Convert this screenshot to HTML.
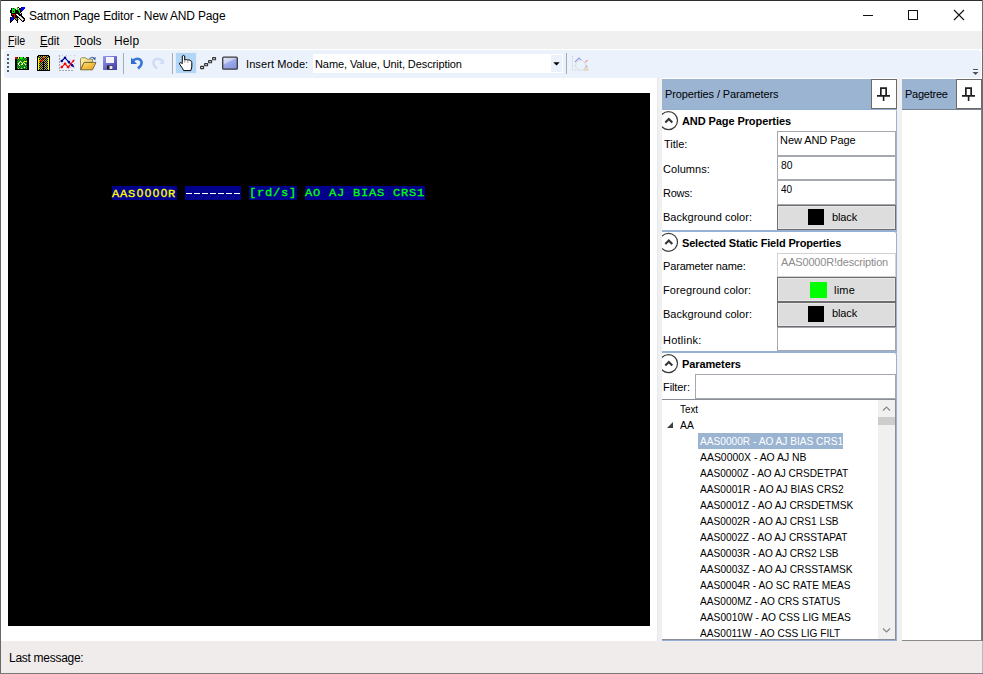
<!DOCTYPE html>
<html><head><meta charset="utf-8"><title>Satmon Page Editor</title>
<style>
*{box-sizing:border-box;margin:0;padding:0}
html,body{width:983px;height:674px;overflow:hidden;background:#fff}
body{position:relative;font-family:"Liberation Sans",sans-serif;font-size:12px;color:#000}
.a{position:absolute}
.t{position:absolute;white-space:nowrap}
.mono{position:absolute;white-space:nowrap;font-family:"Liberation Mono",monospace;font-size:12px;line-height:14px;letter-spacing:0.8px;-webkit-text-stroke:0.35px currentColor;transform:scaleY(0.94);transform-origin:0 0}
.tb{left:777px;width:119px;border:1px solid #a6a8b0;background:#fff}
.btn{left:777px;width:119px;border:1px solid #6e6e6e;background:#dddddd;box-shadow:inset 0 0 0 1px #e8e8e8}
.z{display:inline-block;width:8px;text-align:center;letter-spacing:0;font-family:"Liberation Sans",sans-serif;font-size:11.6px}
u{text-decoration-thickness:1px;text-underline-offset:1px}
</style></head><body>

<!-- window frame -->
<div class="a" style="left:0;top:0;width:983px;height:1px;background:#2e2e2e"></div>
<div class="a" style="left:0;top:0;width:1px;height:674px;background:#686868"></div>
<div class="a" style="left:982px;top:0;width:1px;height:641px;background:#6e6e6e"></div>
<div class="a" style="left:982px;top:641px;width:1px;height:33px;background:#b8b8b8"></div>
<div class="a" style="left:0;top:673px;width:983px;height:1px;background:#787878"></div>

<!-- app icon -->
<svg class="a" style="left:9px;top:6px" width="17" height="17" viewBox="0 0 17 17" shape-rendering="crispEdges"><rect x="8" y="1" width="1" height="1" fill="#a09000"/><rect x="9" y="1" width="1" height="1" fill="#000"/><rect x="12" y="1" width="1" height="1" fill="#000"/><rect x="13" y="1" width="1" height="1" fill="#0000ff"/><rect x="14" y="1" width="1" height="1" fill="#0000ff"/><rect x="15" y="1" width="1" height="1" fill="#0000ff"/><rect x="2" y="2" width="1" height="1" fill="#000"/><rect x="3" y="2" width="1" height="1" fill="#00e800"/><rect x="4" y="2" width="1" height="1" fill="#000"/><rect x="5" y="2" width="1" height="1" fill="#00e800"/><rect x="8" y="2" width="1" height="1" fill="#00e800"/><rect x="9" y="2" width="1" height="1" fill="#fff"/><rect x="10" y="2" width="1" height="1" fill="#000"/><rect x="11" y="2" width="1" height="1" fill="#000"/><rect x="12" y="2" width="1" height="1" fill="#0000ff"/><rect x="13" y="2" width="1" height="1" fill="#0000ff"/><rect x="14" y="2" width="1" height="1" fill="#0000ff"/><rect x="15" y="2" width="1" height="1" fill="#0000ff"/><rect x="2" y="3" width="1" height="1" fill="#000"/><rect x="3" y="3" width="1" height="1" fill="#00e800"/><rect x="4" y="3" width="1" height="1" fill="#00e800"/><rect x="5" y="3" width="1" height="1" fill="#00e800"/><rect x="6" y="3" width="1" height="1" fill="#000"/><rect x="8" y="3" width="1" height="1" fill="#00e800"/><rect x="9" y="3" width="1" height="1" fill="#00e800"/><rect x="10" y="3" width="1" height="1" fill="#000"/><rect x="11" y="3" width="1" height="1" fill="#000"/><rect x="12" y="3" width="1" height="1" fill="#0000ff"/><rect x="13" y="3" width="1" height="1" fill="#0000ff"/><rect x="14" y="3" width="1" height="1" fill="#0000ff"/><rect x="1" y="4" width="1" height="1" fill="#000"/><rect x="2" y="4" width="1" height="1" fill="#000"/><rect x="3" y="4" width="1" height="1" fill="#00e800"/><rect x="4" y="4" width="1" height="1" fill="#00e800"/><rect x="5" y="4" width="1" height="1" fill="#00e800"/><rect x="6" y="4" width="1" height="1" fill="#000"/><rect x="7" y="4" width="1" height="1" fill="#000"/><rect x="8" y="4" width="1" height="1" fill="#000"/><rect x="9" y="4" width="1" height="1" fill="#00e800"/><rect x="10" y="4" width="1" height="1" fill="#00e800"/><rect x="11" y="4" width="1" height="1" fill="#000"/><rect x="12" y="4" width="1" height="1" fill="#0000ff"/><rect x="13" y="4" width="1" height="1" fill="#0000ff"/><rect x="1" y="5" width="1" height="1" fill="#000"/><rect x="2" y="5" width="1" height="1" fill="#000"/><rect x="3" y="5" width="1" height="1" fill="#00e800"/><rect x="4" y="5" width="1" height="1" fill="#000"/><rect x="5" y="5" width="1" height="1" fill="#00e800"/><rect x="6" y="5" width="1" height="1" fill="#000"/><rect x="7" y="5" width="1" height="1" fill="#000"/><rect x="8" y="5" width="1" height="1" fill="#000"/><rect x="9" y="5" width="1" height="1" fill="#000"/><rect x="10" y="5" width="1" height="1" fill="#00e800"/><rect x="11" y="5" width="1" height="1" fill="#000"/><rect x="12" y="5" width="1" height="1" fill="#000"/><rect x="1" y="6" width="1" height="1" fill="#000"/><rect x="2" y="6" width="1" height="1" fill="#000"/><rect x="3" y="6" width="1" height="1" fill="#00e800"/><rect x="4" y="6" width="1" height="1" fill="#00e800"/><rect x="5" y="6" width="1" height="1" fill="#00e800"/><rect x="6" y="6" width="1" height="1" fill="#000"/><rect x="7" y="6" width="1" height="1" fill="#000"/><rect x="8" y="6" width="1" height="1" fill="#000"/><rect x="9" y="6" width="1" height="1" fill="#000"/><rect x="10" y="6" width="1" height="1" fill="#00e800"/><rect x="11" y="6" width="1" height="1" fill="#000"/><rect x="12" y="6" width="1" height="1" fill="#fff"/><rect x="2" y="7" width="1" height="1" fill="#000"/><rect x="3" y="7" width="1" height="1" fill="#000"/><rect x="4" y="7" width="1" height="1" fill="#000"/><rect x="5" y="7" width="1" height="1" fill="#000"/><rect x="6" y="7" width="1" height="1" fill="#000"/><rect x="7" y="7" width="1" height="1" fill="#000"/><rect x="8" y="7" width="1" height="1" fill="#000"/><rect x="9" y="7" width="1" height="1" fill="#000"/><rect x="10" y="7" width="1" height="1" fill="#000"/><rect x="11" y="7" width="1" height="1" fill="#fff"/><rect x="12" y="7" width="1" height="1" fill="#000"/><rect x="2" y="8" width="1" height="1" fill="#000"/><rect x="3" y="8" width="1" height="1" fill="#ff0000"/><rect x="4" y="8" width="1" height="1" fill="#ff0000"/><rect x="5" y="8" width="1" height="1" fill="#ff0000"/><rect x="6" y="8" width="1" height="1" fill="#000"/><rect x="7" y="8" width="1" height="1" fill="#fff"/><rect x="8" y="8" width="1" height="1" fill="#fff"/><rect x="9" y="8" width="1" height="1" fill="#000"/><rect x="10" y="8" width="1" height="1" fill="#000"/><rect x="11" y="8" width="1" height="1" fill="#000"/><rect x="12" y="8" width="1" height="1" fill="#000"/><rect x="2" y="9" width="1" height="1" fill="#000"/><rect x="3" y="9" width="1" height="1" fill="#000"/><rect x="4" y="9" width="1" height="1" fill="#000"/><rect x="5" y="9" width="1" height="1" fill="#ff0000"/><rect x="6" y="9" width="1" height="1" fill="#000"/><rect x="7" y="9" width="1" height="1" fill="#000"/><rect x="8" y="9" width="1" height="1" fill="#fff"/><rect x="9" y="9" width="1" height="1" fill="#fff"/><rect x="10" y="9" width="1" height="1" fill="#000"/><rect x="11" y="9" width="1" height="1" fill="#000"/><rect x="12" y="9" width="1" height="1" fill="#000"/><rect x="3" y="10" width="1" height="1" fill="#000"/><rect x="4" y="10" width="1" height="1" fill="#000"/><rect x="5" y="10" width="1" height="1" fill="#ff0000"/><rect x="6" y="10" width="1" height="1" fill="#000"/><rect x="7" y="10" width="1" height="1" fill="#000"/><rect x="8" y="10" width="1" height="1" fill="#000"/><rect x="9" y="10" width="1" height="1" fill="#c8c8c8"/><rect x="10" y="10" width="1" height="1" fill="#fff"/><rect x="11" y="10" width="1" height="1" fill="#c8c8c8"/><rect x="12" y="10" width="1" height="1" fill="#000"/><rect x="13" y="10" width="1" height="1" fill="#000"/><rect x="1" y="11" width="1" height="1" fill="#000"/><rect x="2" y="11" width="1" height="1" fill="#0000ff"/><rect x="3" y="11" width="1" height="1" fill="#0000ff"/><rect x="4" y="11" width="1" height="1" fill="#000"/><rect x="5" y="11" width="1" height="1" fill="#ff0000"/><rect x="6" y="11" width="1" height="1" fill="#000"/><rect x="7" y="11" width="1" height="1" fill="#000"/><rect x="8" y="11" width="1" height="1" fill="#000"/><rect x="9" y="11" width="1" height="1" fill="#000"/><rect x="10" y="11" width="1" height="1" fill="#c8c8c8"/><rect x="11" y="11" width="1" height="1" fill="#fff"/><rect x="12" y="11" width="1" height="1" fill="#c8c8c8"/><rect x="13" y="11" width="1" height="1" fill="#000"/><rect x="14" y="11" width="1" height="1" fill="#000"/><rect x="1" y="12" width="1" height="1" fill="#000"/><rect x="2" y="12" width="1" height="1" fill="#0000ff"/><rect x="3" y="12" width="1" height="1" fill="#0000ff"/><rect x="4" y="12" width="1" height="1" fill="#0000ff"/><rect x="5" y="12" width="1" height="1" fill="#000"/><rect x="6" y="12" width="1" height="1" fill="#a09000"/><rect x="7" y="12" width="1" height="1" fill="#a09000"/><rect x="8" y="12" width="1" height="1" fill="#000"/><rect x="10" y="12" width="1" height="1" fill="#000"/><rect x="11" y="12" width="1" height="1" fill="#c8c8c8"/><rect x="12" y="12" width="1" height="1" fill="#fff"/><rect x="13" y="12" width="1" height="1" fill="#c8c8c8"/><rect x="14" y="12" width="1" height="1" fill="#000"/><rect x="15" y="12" width="1" height="1" fill="#000"/><rect x="1" y="13" width="1" height="1" fill="#000"/><rect x="2" y="13" width="1" height="1" fill="#0000ff"/><rect x="3" y="13" width="1" height="1" fill="#0000ff"/><rect x="4" y="13" width="1" height="1" fill="#000"/><rect x="6" y="13" width="1" height="1" fill="#000"/><rect x="7" y="13" width="1" height="1" fill="#a09000"/><rect x="8" y="13" width="1" height="1" fill="#000"/><rect x="9" y="13" width="1" height="1" fill="#a09000"/><rect x="11" y="13" width="1" height="1" fill="#000"/><rect x="12" y="13" width="1" height="1" fill="#c8c8c8"/><rect x="13" y="13" width="1" height="1" fill="#fff"/><rect x="14" y="13" width="1" height="1" fill="#c8c8c8"/><rect x="15" y="13" width="1" height="1" fill="#000"/><rect x="1" y="14" width="1" height="1" fill="#000"/><rect x="2" y="14" width="1" height="1" fill="#0000ff"/><rect x="3" y="14" width="1" height="1" fill="#000"/><rect x="7" y="14" width="1" height="1" fill="#000"/><rect x="8" y="14" width="1" height="1" fill="#000"/><rect x="12" y="14" width="1" height="1" fill="#000"/><rect x="13" y="14" width="1" height="1" fill="#c8c8c8"/><rect x="14" y="14" width="1" height="1" fill="#000"/><rect x="15" y="14" width="1" height="1" fill="#000"/><rect x="1" y="15" width="1" height="1" fill="#000"/><rect x="2" y="15" width="1" height="1" fill="#000"/><rect x="8" y="15" width="1" height="1" fill="#000"/><rect x="13" y="15" width="1" height="1" fill="#000"/><rect x="14" y="15" width="1" height="1" fill="#000"/><rect x="1" y="16" width="1" height="1" fill="#000"/><rect x="8" y="16" width="1" height="1" fill="#000"/></svg>

<!-- window buttons -->
<div class="a" style="left:863px;top:15px;width:10px;height:1px;background:#111"></div>
<div class="a" style="left:908px;top:10px;width:10px;height:10px;border:1px solid #111"></div>
<svg class="a" style="left:953px;top:9px" width="12" height="12" viewBox="0 0 12 12"><path d="M1 1L11 11M11 1L1 11" stroke="#111" stroke-width="1.1"/></svg>

<!-- menu bar -->
<div class="a" style="left:1px;top:31px;width:981px;height:18px;background:#f0f0f0"></div>

<!-- toolbar -->
<div class="a" style="left:4px;top:50px;width:977px;height:28px;background:#ebf2fb;border-radius:3px"></div>
<svg class="a" style="left:7px;top:54px" width="3" height="19" viewBox="0 0 3 19"><path d="M0 0h2v2h-2z M0 4h2v2h-2z M0 8h2v2h-2z M0 12h2v2h-2z M0 16h2v2h-2z" fill="#5a5a5a"/></svg>
<!-- icon1 -->
<svg class="a" style="left:15px;top:57px" width="14" height="13" viewBox="0 0 14 13" shape-rendering="crispEdges"><rect x="0" y="0" width="14" height="13" fill="#000"/><rect x="2" y="1" width="1" height="1" fill="#0a600a"/><rect x="3" y="1" width="1" height="1" fill="#18b018"/><rect x="4" y="1" width="1" height="1" fill="#0a600a"/><rect x="5" y="1" width="1" height="1" fill="#18b018"/><rect x="6" y="1" width="1" height="1" fill="#0a600a"/><rect x="7" y="1" width="1" height="1" fill="#18b018"/><rect x="8" y="1" width="1" height="1" fill="#0a600a"/><rect x="9" y="1" width="1" height="1" fill="#18b018"/><rect x="10" y="1" width="1" height="1" fill="#0a600a"/><rect x="11" y="1" width="1" height="1" fill="#18b018"/><rect x="2" y="2" width="1" height="1" fill="#18b018"/><rect x="3" y="2" width="1" height="1" fill="#0a600a"/><rect x="4" y="2" width="1" height="1" fill="#18b018"/><rect x="5" y="2" width="1" height="1" fill="#0a600a"/><rect x="6" y="2" width="1" height="1" fill="#18b018"/><rect x="7" y="2" width="1" height="1" fill="#0a600a"/><rect x="8" y="2" width="1" height="1" fill="#18b018"/><rect x="9" y="2" width="1" height="1" fill="#0a600a"/><rect x="10" y="2" width="1" height="1" fill="#18b018"/><rect x="11" y="2" width="1" height="1" fill="#0a600a"/><rect x="2" y="3" width="1" height="1" fill="#0a600a"/><rect x="3" y="3" width="1" height="1" fill="#18b018"/><rect x="4" y="3" width="1" height="1" fill="#0a600a"/><rect x="5" y="3" width="1" height="1" fill="#18b018"/><rect x="6" y="3" width="1" height="1" fill="#0a600a"/><rect x="7" y="3" width="1" height="1" fill="#18b018"/><rect x="8" y="3" width="1" height="1" fill="#0a600a"/><rect x="9" y="3" width="1" height="1" fill="#18b018"/><rect x="10" y="3" width="1" height="1" fill="#0a600a"/><rect x="11" y="3" width="1" height="1" fill="#18b018"/><rect x="2" y="4" width="1" height="1" fill="#18b018"/><rect x="3" y="4" width="1" height="1" fill="#0a600a"/><rect x="4" y="4" width="1" height="1" fill="#18b018"/><rect x="5" y="4" width="1" height="1" fill="#0a600a"/><rect x="6" y="4" width="1" height="1" fill="#18b018"/><rect x="7" y="4" width="1" height="1" fill="#0a600a"/><rect x="8" y="4" width="1" height="1" fill="#18b018"/><rect x="9" y="4" width="1" height="1" fill="#0a600a"/><rect x="10" y="4" width="1" height="1" fill="#18b018"/><rect x="11" y="4" width="1" height="1" fill="#0a600a"/><rect x="2" y="5" width="1" height="1" fill="#0a600a"/><rect x="3" y="5" width="1" height="1" fill="#18b018"/><rect x="4" y="5" width="1" height="1" fill="#0a600a"/><rect x="5" y="5" width="1" height="1" fill="#18b018"/><rect x="6" y="5" width="1" height="1" fill="#0a600a"/><rect x="7" y="5" width="1" height="1" fill="#18b018"/><rect x="8" y="5" width="1" height="1" fill="#0a600a"/><rect x="9" y="5" width="1" height="1" fill="#18b018"/><rect x="10" y="5" width="1" height="1" fill="#0a600a"/><rect x="11" y="5" width="1" height="1" fill="#18b018"/><rect x="2" y="6" width="1" height="1" fill="#18b018"/><rect x="3" y="6" width="1" height="1" fill="#0a600a"/><rect x="4" y="6" width="1" height="1" fill="#18b018"/><rect x="5" y="6" width="1" height="1" fill="#0a600a"/><rect x="6" y="6" width="1" height="1" fill="#18b018"/><rect x="7" y="6" width="1" height="1" fill="#0a600a"/><rect x="8" y="6" width="1" height="1" fill="#18b018"/><rect x="9" y="6" width="1" height="1" fill="#0a600a"/><rect x="10" y="6" width="1" height="1" fill="#18b018"/><rect x="11" y="6" width="1" height="1" fill="#0a600a"/><rect x="2" y="7" width="1" height="1" fill="#0a600a"/><rect x="3" y="7" width="1" height="1" fill="#18b018"/><rect x="4" y="7" width="1" height="1" fill="#0a600a"/><rect x="5" y="7" width="1" height="1" fill="#18b018"/><rect x="6" y="7" width="1" height="1" fill="#0a600a"/><rect x="7" y="7" width="1" height="1" fill="#18b018"/><rect x="8" y="7" width="1" height="1" fill="#0a600a"/><rect x="9" y="7" width="1" height="1" fill="#18b018"/><rect x="10" y="7" width="1" height="1" fill="#0a600a"/><rect x="11" y="7" width="1" height="1" fill="#18b018"/><rect x="2" y="8" width="1" height="1" fill="#18b018"/><rect x="3" y="8" width="1" height="1" fill="#0a600a"/><rect x="4" y="8" width="1" height="1" fill="#18b018"/><rect x="5" y="8" width="1" height="1" fill="#0a600a"/><rect x="6" y="8" width="1" height="1" fill="#18b018"/><rect x="7" y="8" width="1" height="1" fill="#0a600a"/><rect x="8" y="8" width="1" height="1" fill="#18b018"/><rect x="9" y="8" width="1" height="1" fill="#0a600a"/><rect x="10" y="8" width="1" height="1" fill="#18b018"/><rect x="11" y="8" width="1" height="1" fill="#0a600a"/><rect x="2" y="9" width="1" height="1" fill="#0a600a"/><rect x="3" y="9" width="1" height="1" fill="#18b018"/><rect x="4" y="9" width="1" height="1" fill="#0a600a"/><rect x="5" y="9" width="1" height="1" fill="#18b018"/><rect x="6" y="9" width="1" height="1" fill="#0a600a"/><rect x="7" y="9" width="1" height="1" fill="#18b018"/><rect x="8" y="9" width="1" height="1" fill="#0a600a"/><rect x="9" y="9" width="1" height="1" fill="#18b018"/><rect x="10" y="9" width="1" height="1" fill="#0a600a"/><rect x="11" y="9" width="1" height="1" fill="#18b018"/><rect x="2" y="10" width="1" height="1" fill="#18b018"/><rect x="3" y="10" width="1" height="1" fill="#0a600a"/><rect x="4" y="10" width="1" height="1" fill="#18b018"/><rect x="5" y="10" width="1" height="1" fill="#0a600a"/><rect x="6" y="10" width="1" height="1" fill="#18b018"/><rect x="7" y="10" width="1" height="1" fill="#0a600a"/><rect x="8" y="10" width="1" height="1" fill="#18b018"/><rect x="9" y="10" width="1" height="1" fill="#0a600a"/><rect x="10" y="10" width="1" height="1" fill="#18b018"/><rect x="11" y="10" width="1" height="1" fill="#0a600a"/><rect x="2" y="11" width="1" height="1" fill="#0a600a"/><rect x="3" y="11" width="1" height="1" fill="#18b018"/><rect x="4" y="11" width="1" height="1" fill="#0a600a"/><rect x="5" y="11" width="1" height="1" fill="#18b018"/><rect x="6" y="11" width="1" height="1" fill="#0a600a"/><rect x="7" y="11" width="1" height="1" fill="#18b018"/><rect x="8" y="11" width="1" height="1" fill="#0a600a"/><rect x="9" y="11" width="1" height="1" fill="#18b018"/><rect x="10" y="11" width="1" height="1" fill="#0a600a"/><rect x="11" y="11" width="1" height="1" fill="#18b018"/><rect x="0" y="0" width="2" height="2" fill="#ff0000"/><rect x="3" y="0" width="1" height="2" fill="#ffff00"/><rect x="5" y="0" width="3" height="2" fill="#00ff00"/><rect x="9" y="0" width="2" height="1" fill="#e0e0e0"/><rect x="3" y="6" width="1" height="1" fill="#fff"/><rect x="4" y="5" width="1" height="1" fill="#fff"/><rect x="5" y="4" width="1" height="1" fill="#e0ffe0"/><rect x="6" y="5" width="1" height="1" fill="#ffff40"/><rect x="7" y="6" width="1" height="1" fill="#fff"/><rect x="8" y="5" width="1" height="1" fill="#ffff40"/><rect x="9" y="4" width="1" height="1" fill="#ffff00"/><rect x="10" y="4" width="1" height="1" fill="#ffff00"/><rect x="11" y="4" width="1" height="1" fill="#e0e000"/><rect x="3" y="7" width="1" height="1" fill="#e0ffe0"/><rect x="4" y="8" width="1" height="1" fill="#fff"/><rect x="6" y="7" width="1" height="1" fill="#ffff00"/><rect x="7" y="7" width="1" height="1" fill="#e8e8a0"/><rect x="9" y="6" width="1" height="1" fill="#d0ffd0"/><rect x="10" y="7" width="1" height="1" fill="#d0ffd0"/><rect x="3" y="11" width="1" height="1" fill="#c0c0c0"/><rect x="6" y="11" width="1" height="1" fill="#c0c0c0"/><rect x="9" y="10" width="1" height="1" fill="#d0e8d0"/></svg>
<!-- icon2 -->
<svg class="a" style="left:37px;top:55px" width="13" height="16" viewBox="0 0 13 16" shape-rendering="crispEdges"><rect x="0" y="1" width="13" height="15" fill="#000"/><rect x="1" y="0" width="11" height="16" fill="#000"/><rect x="2" y="1" width="1" height="1" fill="#c8c800"/><rect x="4" y="1" width="1" height="1" fill="#c8c800"/><rect x="6" y="1" width="1" height="1" fill="#c8c800"/><rect x="8" y="1" width="1" height="1" fill="#c8c800"/><rect x="10" y="1" width="1" height="1" fill="#c8c800"/><rect x="1" y="2" width="1" height="1" fill="#9a9a80"/><rect x="3" y="2" width="1" height="1" fill="#9a9a80"/><rect x="5" y="2" width="1" height="1" fill="#9a9a80"/><rect x="7" y="2" width="1" height="1" fill="#9a9a80"/><rect x="9" y="2" width="1" height="1" fill="#9a9a80"/><rect x="11" y="2" width="1" height="1" fill="#9a9a80"/><rect x="2" y="3" width="1" height="1" fill="#c8c800"/><rect x="4" y="3" width="1" height="1" fill="#c8c800"/><rect x="6" y="3" width="1" height="1" fill="#c8c800"/><rect x="8" y="3" width="1" height="1" fill="#c8c800"/><rect x="10" y="3" width="1" height="1" fill="#c8c800"/><rect x="1" y="4" width="1" height="1" fill="#9a9a80"/><rect x="3" y="4" width="1" height="1" fill="#9a9a80"/><rect x="5" y="4" width="1" height="1" fill="#9a9a80"/><rect x="7" y="4" width="1" height="1" fill="#9a9a80"/><rect x="9" y="4" width="1" height="1" fill="#9a9a80"/><rect x="11" y="4" width="1" height="1" fill="#9a9a80"/><rect x="2" y="5" width="1" height="1" fill="#c8c800"/><rect x="4" y="5" width="1" height="1" fill="#c8c800"/><rect x="6" y="5" width="1" height="1" fill="#c8c800"/><rect x="8" y="5" width="1" height="1" fill="#c8c800"/><rect x="10" y="5" width="1" height="1" fill="#c8c800"/><rect x="1" y="6" width="1" height="1" fill="#9a9a80"/><rect x="3" y="6" width="1" height="1" fill="#9a9a80"/><rect x="5" y="6" width="1" height="1" fill="#9a9a80"/><rect x="7" y="6" width="1" height="1" fill="#9a9a80"/><rect x="9" y="6" width="1" height="1" fill="#9a9a80"/><rect x="11" y="6" width="1" height="1" fill="#9a9a80"/><rect x="2" y="7" width="1" height="1" fill="#c8c800"/><rect x="4" y="7" width="1" height="1" fill="#c8c800"/><rect x="6" y="7" width="1" height="1" fill="#c8c800"/><rect x="8" y="7" width="1" height="1" fill="#c8c800"/><rect x="10" y="7" width="1" height="1" fill="#c8c800"/><rect x="1" y="8" width="1" height="1" fill="#9a9a80"/><rect x="3" y="8" width="1" height="1" fill="#9a9a80"/><rect x="5" y="8" width="1" height="1" fill="#9a9a80"/><rect x="7" y="8" width="1" height="1" fill="#9a9a80"/><rect x="9" y="8" width="1" height="1" fill="#9a9a80"/><rect x="11" y="8" width="1" height="1" fill="#9a9a80"/><rect x="2" y="9" width="1" height="1" fill="#c8c800"/><rect x="4" y="9" width="1" height="1" fill="#c8c800"/><rect x="6" y="9" width="1" height="1" fill="#c8c800"/><rect x="8" y="9" width="1" height="1" fill="#c8c800"/><rect x="10" y="9" width="1" height="1" fill="#c8c800"/><rect x="1" y="10" width="1" height="1" fill="#9a9a80"/><rect x="3" y="10" width="1" height="1" fill="#9a9a80"/><rect x="5" y="10" width="1" height="1" fill="#9a9a80"/><rect x="7" y="10" width="1" height="1" fill="#9a9a80"/><rect x="9" y="10" width="1" height="1" fill="#9a9a80"/><rect x="11" y="10" width="1" height="1" fill="#9a9a80"/><rect x="2" y="11" width="1" height="1" fill="#c8c800"/><rect x="4" y="11" width="1" height="1" fill="#c8c800"/><rect x="6" y="11" width="1" height="1" fill="#c8c800"/><rect x="8" y="11" width="1" height="1" fill="#c8c800"/><rect x="10" y="11" width="1" height="1" fill="#c8c800"/><rect x="1" y="12" width="1" height="1" fill="#9a9a80"/><rect x="3" y="12" width="1" height="1" fill="#9a9a80"/><rect x="5" y="12" width="1" height="1" fill="#9a9a80"/><rect x="7" y="12" width="1" height="1" fill="#9a9a80"/><rect x="9" y="12" width="1" height="1" fill="#9a9a80"/><rect x="11" y="12" width="1" height="1" fill="#9a9a80"/><rect x="2" y="13" width="1" height="1" fill="#c8c800"/><rect x="4" y="13" width="1" height="1" fill="#c8c800"/><rect x="6" y="13" width="1" height="1" fill="#c8c800"/><rect x="8" y="13" width="1" height="1" fill="#c8c800"/><rect x="10" y="13" width="1" height="1" fill="#c8c800"/><rect x="1" y="14" width="1" height="1" fill="#9a9a80"/><rect x="3" y="14" width="1" height="1" fill="#9a9a80"/><rect x="5" y="14" width="1" height="1" fill="#9a9a80"/><rect x="7" y="14" width="1" height="1" fill="#9a9a80"/><rect x="9" y="14" width="1" height="1" fill="#9a9a80"/><rect x="11" y="14" width="1" height="1" fill="#9a9a80"/><rect x="1" y="3" width="1" height="1" fill="#ffff00"/><rect x="11" y="3" width="1" height="1" fill="#ffff00"/><rect x="1" y="4" width="1" height="1" fill="#ffff00"/><rect x="11" y="4" width="1" height="1" fill="#ffff00"/><rect x="1" y="5" width="1" height="1" fill="#ffff00"/><rect x="11" y="5" width="1" height="1" fill="#ffff00"/><rect x="1" y="6" width="1" height="1" fill="#ffff00"/><rect x="11" y="6" width="1" height="1" fill="#ffff00"/><rect x="1" y="7" width="1" height="1" fill="#ffff00"/><rect x="11" y="7" width="1" height="1" fill="#ffff00"/><rect x="1" y="8" width="1" height="1" fill="#ffff00"/><rect x="11" y="8" width="1" height="1" fill="#ffff00"/><rect x="1" y="9" width="1" height="1" fill="#ffff00"/><rect x="11" y="9" width="1" height="1" fill="#ffff00"/><rect x="1" y="10" width="1" height="1" fill="#ffff00"/><rect x="11" y="10" width="1" height="1" fill="#ffff00"/><rect x="1" y="11" width="1" height="1" fill="#ffff00"/><rect x="11" y="11" width="1" height="1" fill="#ffff00"/><rect x="1" y="12" width="1" height="1" fill="#ffff00"/><rect x="11" y="12" width="1" height="1" fill="#ffff00"/><rect x="1" y="13" width="1" height="1" fill="#ffff00"/><rect x="11" y="13" width="1" height="1" fill="#ffff00"/><rect x="1" y="14" width="1" height="1" fill="#ffff00"/><rect x="11" y="14" width="1" height="1" fill="#ffff00"/><rect x="6" y="6" width="1" height="8" fill="#000"/><rect x="2" y="6" width="1" height="1" fill="#ff2000"/><rect x="3" y="5" width="1" height="1" fill="#ff2000"/><rect x="4" y="5" width="1" height="1" fill="#ff2000"/><rect x="5" y="4" width="1" height="1" fill="#ff2000"/><rect x="6" y="3" width="1" height="1" fill="#ff2000"/><rect x="6" y="2" width="1" height="1" fill="#ff2000"/><rect x="7" y="1" width="1" height="1" fill="#ff2000"/><rect x="3" y="6" width="1" height="1" fill="#a00000"/><rect x="4" y="6" width="1" height="1" fill="#a00000"/><rect x="5" y="5" width="1" height="1" fill="#a00000"/></svg>
<!-- icon3 chart -->
<svg class="a" style="left:58px;top:55px" width="17" height="17" viewBox="0 0 17 17">
<path d="M1.5 0.5v15M1.5 15.5h15" stroke="#606060" stroke-width="1.2" stroke-dasharray="1 2"/>
<path d="M4 0.5h13M4 4.5h13M4 8.5h13M4 12.5h13" stroke="#b0b0b0" stroke-width="0.8" stroke-dasharray="0.8 3.2"/>
<path d="M3.8 6 L7 2.8 L10.9 7.1 L15.9 12.1" stroke="#000090" stroke-width="1.1" fill="none"/>
<circle cx="3.8" cy="6" r="1.3" fill="#000090"/><circle cx="7" cy="2.8" r="1.3" fill="#000090"/><circle cx="10.9" cy="7.1" r="1.3" fill="#000090"/><circle cx="14.1" cy="10.3" r="1.3" fill="#000090"/>
<path d="M3.8 12.1 L7 8.9 L10.2 12.1 L15.5 5.7" stroke="#ff0000" stroke-width="1.1" fill="none"/>
<circle cx="3.8" cy="12.1" r="1.3" fill="#ff0000"/><circle cx="7" cy="8.9" r="1.3" fill="#ff0000"/><circle cx="10.2" cy="12.1" r="1.3" fill="#ff0000"/><circle cx="15.5" cy="5.7" r="1" fill="#ff0000"/>
</svg>
<!-- icon4 folder -->
<svg class="a" style="left:80px;top:56px" width="17" height="15" viewBox="0 0 17 15">
<defs><linearGradient id="fg" x1="0" y1="0" x2="1" y2="1"><stop offset="0" stop-color="#fff8b0"/><stop offset="1" stop-color="#e8c050"/></linearGradient>
<linearGradient id="fg2" x1="0" y1="0" x2="0.8" y2="1"><stop offset="0" stop-color="#ffe07a"/><stop offset="1" stop-color="#eaa418"/></linearGradient></defs>
<path d="M0.5 2.8 L1.5 1.8 H5.8 L7 3.2 H12.5 V6.4 H4.2 L0.5 13.6z" fill="url(#fg)" stroke="#8c7c58" stroke-width="0.9"/>
<path d="M4.2 6.4 H16 L12.5 13.8 H0.6z" fill="url(#fg2)" stroke="#6e5e38" stroke-width="0.9"/>
<path d="M9.6 2.6 Q11.8 0.2 14.2 2" stroke="#4a6fa8" stroke-width="1.1" fill="none"/><path d="M12.6 2.6 L15.8 1 L15.3 4.6z" fill="#3c64a0"/>
</svg>
<!-- icon5 save -->
<svg class="a" style="left:103px;top:56px" width="14" height="14" viewBox="0 0 14 14">
<defs><linearGradient id="sg" x1="0" y1="0" x2="1" y2="1"><stop offset="0" stop-color="#9a9af0"/><stop offset="1" stop-color="#3a3aa8"/></linearGradient></defs>
<rect x="0" y="0" width="14" height="14" rx="0.5" fill="url(#sg)"/>
<rect x="3" y="1" width="8" height="6" fill="#f4f4f8"/>
<rect x="4" y="9.5" width="6" height="4" fill="#222"/><rect x="6.5" y="10" width="3" height="3" fill="#e8e8e8"/>
</svg>
<div class="a" style="left:123px;top:53px;width:1px;height:21px;background:#a6acb3"></div>
<!-- undo -->
<svg class="a" style="left:130px;top:56px" width="14" height="14" viewBox="0 0 14 14">
<path d="M2.5 5 Q6 1.5 10 3.5 Q13 6 10.5 10 L8 12.5" stroke="#3a78d8" stroke-width="2.6" fill="none"/>
<path d="M1 1.5 V8 H7z" fill="#2f6fd4"/>
</svg>
<!-- redo disabled -->
<svg class="a" style="left:151px;top:56px" width="14" height="14" viewBox="0 0 14 14">
<path d="M11.5 5 Q8 1.5 4 3.5 Q1 6 3.5 10 L6 12.5" stroke="#cddcf2" stroke-width="2.4" fill="none"/>
<path d="M13 3 V8 H8z" fill="#cddcf2"/>
</svg>
<div class="a" style="left:172px;top:53px;width:1px;height:21px;background:#a6acb3"></div>
<div class="a" style="left:175px;top:52px;width:22px;height:22px;background:#e8eef6"></div>
<div class="a" style="left:176px;top:53px;width:20px;height:20px;background:#b1d6f8"></div>
<!-- hand -->
<svg class="a" style="left:176px;top:53px" width="20" height="20" viewBox="0 0 20 20">
<path d="M6.3 9.5 V3 Q7.5 1.8 8.7 3 V7 Q10.3 6.2 11.8 7 Q13.4 6.6 14.8 7.8 Q15.8 8 15.8 9.5 V14 L14.8 17.6 H7.6 L6.6 15.5 L3.6 11.2 Q3 10 4.2 9.7 Q5.2 9.6 6.3 10.6 Z" fill="#fff" stroke="#000" stroke-width="1"/>
<path d="M8.8 7.2v2.5M11.8 7.3v2.5" stroke="#8a8a8a" stroke-width="0.9"/>
</svg>
<!-- line tool -->
<svg class="a" style="left:200px;top:56px" width="17" height="14" viewBox="0 0 17 14">
<g fill="#e0e0e0" stroke="#333" stroke-width="1.1">
<rect x="0.6" y="10.4" width="3" height="2.2" rx="0.4"/><rect x="4.6" y="7.6" width="3" height="2.2" rx="0.4"/>
<rect x="8.6" y="4.6" width="3" height="2.2" rx="0.4"/><rect x="12.6" y="1.6" width="3" height="2.2" rx="0.4"/></g>
</svg>
<!-- rect tool -->
<svg class="a" style="left:222px;top:56px" width="16" height="14" viewBox="0 0 16 14">
<defs><linearGradient id="rg" x1="0" y1="0" x2="0.6" y2="1"><stop offset="0" stop-color="#eeeefa"/><stop offset="0.45" stop-color="#c8cdf0"/><stop offset="0.5" stop-color="#a0acea"/><stop offset="1" stop-color="#8898e0"/></linearGradient></defs>
<rect x="0.7" y="1.2" width="14.6" height="12" rx="1" fill="url(#rg)" stroke="#3a3a3a" stroke-width="1.3"/>
</svg>

<!-- combo -->
<div class="a" style="left:313px;top:54px;width:250px;height:19px;background:#fff"></div>
<div class="a" style="left:551px;top:55px;width:11px;height:17px;background:#ebf2fb"></div>
<svg class="a" style="left:553px;top:62px" width="7" height="5" viewBox="0 0 7 5"><path d="M0.3 0.2h6.4l-3.2 3.3z" fill="#000"/></svg>
<div class="a" style="left:566px;top:53px;width:1px;height:21px;background:#a6acb3"></div>
<!-- disabled chart icon -->
<svg class="a" style="left:572px;top:55px;opacity:0.35" width="17" height="16" viewBox="0 0 17 16">
<path d="M0.5 1v14M0.5 15h16" stroke="#888" stroke-width="1" stroke-dasharray="1 1.5"/>
<path d="M3 7 L7 3 L11 7 L15 12" stroke="#0000c0" stroke-width="1.2" fill="none"/>
<path d="M3 11.5 L6 8.5 L9 11.5 L15.5 5" stroke="#ff0000" stroke-width="1.2" fill="none"/>
<circle cx="8.6" cy="10.3" r="5" fill="#eef3fa" stroke="#c0c4c8" stroke-width="1.2"/>
<rect x="12" y="12" width="4" height="4" fill="#e0b060"/>
</svg>
<!-- overflow -->
<svg class="a" style="left:972px;top:69px" width="7" height="6" viewBox="0 0 7 6"><rect x="1" y="0" width="5" height="1" fill="#505050"/><rect x="1" y="1" width="5" height="1" fill="#fff"/><path d="M0.5 3h6l-3 3z" fill="#505050"/></svg>

<!-- canvas -->
<div class="a" style="left:8px;top:93px;width:642px;height:533px;background:#000"></div>
<div class="a" style="left:112px;top:186px;width:65px;height:14px;background:#00008c"></div>
<div class="a" style="left:185px;top:186px;width:56px;height:14px;background:#00008c"></div>
<div class="a" style="left:249px;top:186px;width:48px;height:14px;background:#00008c"></div>
<div class="a" style="left:305px;top:186px;width:120px;height:14px;background:#00008c"></div>
<div class="mono" style="left:112px;top:187.4px;color:#ffff00">AAS<span class="z">0</span><span class="z">0</span><span class="z">0</span><span class="z">0</span>R</div>
<div class="a" style="left:186px;top:193px;width:54px;height:1px;background:repeating-linear-gradient(90deg,#fff 0 6px,transparent 6px 8px)"></div>
<div class="mono" style="left:249px;top:187.4px;color:#00ff00">[rd/s]</div>
<div class="mono" style="left:305px;top:187.4px;color:#00ff00">AO AJ BIAS CRS1</div>

<!-- status bar -->
<div class="a" style="left:1px;top:641px;width:981px;height:32px;background:#f1ecec"></div>

<!-- right panel -->
<div class="a" style="left:662px;top:79px;width:235px;height:30px;background:#9ab4d2"></div>
<div class="a" style="left:902px;top:79px;width:80px;height:30px;background:#9ab4d2"></div>
<div class="a" style="left:871px;top:79px;width:26px;height:30px;background:#fff;border:1px solid #6a6a6a"></div>
<svg class="a" style="left:877px;top:87px" width="13" height="14" viewBox="0 0 13 14"><path d="M3 0.2h7v8h-1.7v-6.3h-3.6v6.3h-1.7z M0 8h13v1.7h-13z M5.8 9.7h1.6v4.2h-1.6z" fill="#1e1e1e"/></svg>
<div class="a" style="left:956px;top:79px;width:26px;height:30px;background:#fff;border:1px solid #6a6a6a"></div>
<svg class="a" style="left:962px;top:87px" width="13" height="14" viewBox="0 0 13 14"><path d="M3 0.2h7v8h-1.7v-6.3h-3.6v6.3h-1.7z M0 8h13v1.7h-13z M5.8 9.7h1.6v4.2h-1.6z" fill="#1e1e1e"/></svg>

<div class="a" style="left:662px;top:109px;width:235px;height:1px;background:#93b0d2"></div>
<div class="a" style="left:902px;top:109px;width:80px;height:532px;border-top:1px solid #7a8292;border-bottom:1px solid #8a8a8a;border-right:1px solid #7c7e86;background:#fff"></div>

<!-- sections -->
<div class="a" style="left:650px;top:109px;width:247px;height:123px;border:solid #96b1d3;border-width:0 1px 2px 0;border-radius:0 3px 0 0"></div>
<div class="a" style="left:650px;top:231px;width:247px;height:122px;border:solid #96b1d3;border-width:1px 1px 2px 0;border-radius:0 3px 0 0"></div>
<div class="a" style="left:650px;top:352px;width:247px;height:289px;border:solid #96b1d3;border-width:1px 1px 1px 0;border-radius:0 3px 0 0"></div>
<div class="a" style="left:650px;top:78px;width:7px;height:563px;background:#fff"></div>
<div class="a" style="left:657px;top:78px;width:1px;height:563px;background:#e2e8ef"></div>
<div class="a" style="left:658px;top:78px;width:4px;height:563px;background:#f0f0f0"></div>
<div class="a" style="left:897px;top:78px;width:5px;height:563px;background:#f0f0f0"></div>

<svg class="a" style="left:662px;top:110px" width="18" height="22" viewBox="0 0 18 22"><circle cx="6.5" cy="10.6" r="9" fill="none" stroke="#3c3c3c" stroke-width="1.2"/><path d="M3.3 12.4 L6.8 8.9 L10.3 12.4" fill="none" stroke="#333" stroke-width="2.1"/></svg>
<div class="a tb" style="top:131px;height:25px"></div>
<div class="a tb" style="top:156px;height:24px"></div>
<div class="a tb" style="top:180px;height:25px"></div>
<div class="a btn" style="top:205px;height:25px"></div>
<div class="a" style="left:808px;top:209px;width:16px;height:16px;background:#000"></div>

<svg class="a" style="left:662px;top:231px" width="18" height="22" viewBox="0 0 18 22"><circle cx="6.5" cy="11.3" r="9" fill="none" stroke="#3c3c3c" stroke-width="1.2"/><path d="M3.3 13.100000000000001 L6.8 9.600000000000001 L10.3 13.100000000000001" fill="none" stroke="#333" stroke-width="2.1"/></svg>
<div class="a tb" style="top:253px;height:24px;border-color:#d2d2d6"></div>
<div class="a btn" style="top:277px;height:25px"></div>
<div class="a btn" style="top:302px;height:25px"></div>
<div class="a tb" style="top:327px;height:24px"></div>
<div class="a" style="left:810px;top:282px;width:17px;height:16px;background:#00ff00"></div>
<div class="a" style="left:808px;top:306px;width:16px;height:16px;background:#000"></div>

<svg class="a" style="left:662px;top:352px" width="18" height="22" viewBox="0 0 18 22"><circle cx="6.5" cy="11.6" r="9" fill="none" stroke="#3c3c3c" stroke-width="1.2"/><path d="M3.3 13.4 L6.8 9.9 L10.3 13.4" fill="none" stroke="#333" stroke-width="2.1"/></svg>
<div class="a tb" style="left:695px;top:374px;width:201px;height:25px"></div>
<div class="a" style="left:662px;top:399px;width:234px;height:241px;border-top:1px solid #8a8e96;border-right:1px solid #8a8e96;border-bottom:1px solid #8a8e96;background:#fff"></div>
<div class="a" style="left:878px;top:400px;width:17px;height:239px;background:#f0f0f0"></div>
<div class="a" style="left:878px;top:417px;width:17px;height:8px;background:#cdcdcd"></div>
<svg class="a" style="left:882px;top:405px" width="9" height="7" viewBox="0 0 9 7"><path d="M1 5.5 L4.5 2 L8 5.5" stroke="#858585" stroke-width="1.1" fill="none"/></svg>
<svg class="a" style="left:882px;top:627px" width="9" height="7" viewBox="0 0 9 7"><path d="M1 1.5 L4.5 5 L8 1.5" stroke="#858585" stroke-width="1.1" fill="none"/></svg>
<svg class="a" style="left:667px;top:422px" width="6" height="6" viewBox="0 0 6 6"><path d="M6 0 V6 H0z" fill="#404040"/></svg>
<div class="a" style="left:698px;top:433px;width:145px;height:16px;background:#9ab4d2"></div>

<div class="t" style="left:29px;top:10px;font-size:12px;line-height:12px;letter-spacing:-0.152px;">Satmon Page Editor - New AND Page</div>
<div class="t" style="left:8px;top:35px;font-size:12px;line-height:12px;transform:scaleX(0.8906);transform-origin:0 0;"><u>F</u>ile</div>
<div class="t" style="left:40px;top:35px;font-size:12px;line-height:12px;transform:scaleX(0.9435);transform-origin:0 0;"><u>E</u>dit</div>
<div class="t" style="left:74px;top:35px;font-size:12px;line-height:12px;letter-spacing:-0.15px;"><u>T</u>ools</div>
<div class="t" style="left:114px;top:35px;font-size:12px;line-height:12px;letter-spacing:0.133px;">Help</div>
<div class="t" style="left:246px;top:59px;font-size:11px;line-height:11px;letter-spacing:0.091px;">Insert Mode:</div>
<div class="t" style="left:315px;top:59px;font-size:11px;line-height:11px;letter-spacing:-0.09px;">Name, Value, Unit, Description</div>
<div class="t" style="left:9px;top:652px;font-size:12px;line-height:12px;letter-spacing:-0.283px;">Last message:</div>
<div class="t" style="left:665px;top:89px;font-size:11px;line-height:11px;letter-spacing:-0.118px;">Properties / Parameters</div>
<div class="t" style="left:905px;top:89px;font-size:11px;line-height:11px;letter-spacing:-0.244px;">Pagetree</div>
<div class="t" style="left:682px;top:116px;font-size:11px;line-height:11px;letter-spacing:-0.089px;font-weight:700;">AND Page Properties</div>
<div class="t" style="left:664px;top:139px;font-size:11px;line-height:11px;letter-spacing:-0.02px;">Title:</div>
<div class="t" style="left:663px;top:164px;font-size:11px;line-height:11px;letter-spacing:0.056px;">Columns:</div>
<div class="t" style="left:663px;top:188px;font-size:11px;line-height:11px;letter-spacing:-0.275px;">Rows:</div>
<div class="t" style="left:663px;top:212px;font-size:11px;line-height:11px;letter-spacing:0.018px;">Background color:</div>
<div class="t" style="left:780px;top:135px;font-size:11px;line-height:11px;letter-spacing:-0.064px;">New AND Page</div>
<div class="t" style="left:781px;top:160px;font-size:11px;line-height:11px;transform:scaleX(0.9353);transform-origin:0 0;">80</div>
<div class="t" style="left:781px;top:184px;font-size:11px;line-height:11px;transform:scaleX(0.911);transform-origin:0 0;">40</div>
<div class="t" style="left:832px;top:212px;font-size:11px;line-height:11px;letter-spacing:-0.125px;">black</div>
<div class="t" style="left:682px;top:238px;font-size:11px;line-height:11px;letter-spacing:-0.165px;font-weight:700;">Selected Static Field Properties</div>
<div class="t" style="left:663px;top:261px;font-size:11px;line-height:11px;letter-spacing:-0.164px;">Parameter name:</div>
<div class="t" style="left:663px;top:285px;font-size:11px;line-height:11px;letter-spacing:0.081px;">Foreground color:</div>
<div class="t" style="left:663px;top:309px;font-size:11px;line-height:11px;letter-spacing:0.018px;">Background color:</div>
<div class="t" style="left:663px;top:335px;font-size:11px;line-height:11px;letter-spacing:0.243px;">Hotlink:</div>
<div class="t" style="left:781px;top:257px;font-size:11px;line-height:11px;letter-spacing:-0.184px;color:#8c8c8c;">AAS0000R!description</div>
<div class="t" style="left:834px;top:285px;font-size:11px;line-height:11px;letter-spacing:0.234px;">lime</div>
<div class="t" style="left:832px;top:308px;font-size:11px;line-height:11px;letter-spacing:-0.125px;">black</div>
<div class="t" style="left:682px;top:359px;font-size:11px;line-height:11px;letter-spacing:-0.111px;font-weight:700;">Parameters</div>
<div class="t" style="left:663px;top:382px;font-size:11px;line-height:11px;letter-spacing:-0.083px;">Filter:</div>
<div class="t" style="left:680px;top:404px;font-size:11px;line-height:11px;transform:scaleX(0.896);transform-origin:0 0;">Text</div>
<div class="t" style="left:680px;top:420px;font-size:11px;line-height:11px;transform:scaleX(0.9419);transform-origin:0 0;">AA</div>
<div class="t" style="left:700px;top:436px;font-size:11px;line-height:11px;transform:scaleX(0.9219);transform-origin:0 0;color:#fff;">AAS0000R - AO AJ BIAS CRS1</div>
<div class="t" style="left:700px;top:452px;font-size:11px;line-height:11px;transform:scaleX(0.9473);transform-origin:0 0;">AAS0000X - AO AJ NB</div>
<div class="t" style="left:700px;top:468px;font-size:11px;line-height:11px;transform:scaleX(0.9161);transform-origin:0 0;">AAS0000Z - AO AJ CRSDETPAT</div>
<div class="t" style="left:700px;top:484px;font-size:11px;line-height:11px;transform:scaleX(0.9252);transform-origin:0 0;">AAS0001R - AO AJ BIAS CRS2</div>
<div class="t" style="left:700px;top:500px;font-size:11px;line-height:11px;transform:scaleX(0.9255);transform-origin:0 0;">AAS0001Z - AO AJ CRSDETMSK</div>
<div class="t" style="left:700px;top:516px;font-size:11px;line-height:11px;transform:scaleX(0.9178);transform-origin:0 0;">AAS0002R - AO AJ CRS1 LSB</div>
<div class="t" style="left:700px;top:532px;font-size:11px;line-height:11px;transform:scaleX(0.9206);transform-origin:0 0;">AAS0002Z - AO AJ CRSSTAPAT</div>
<div class="t" style="left:700px;top:548px;font-size:11px;line-height:11px;transform:scaleX(0.9178);transform-origin:0 0;">AAS0003R - AO AJ CRS2 LSB</div>
<div class="t" style="left:700px;top:564px;font-size:11px;line-height:11px;transform:scaleX(0.9286);transform-origin:0 0;">AAS0003Z - AO AJ CRSSTAMSK</div>
<div class="t" style="left:700px;top:580px;font-size:11px;line-height:11px;transform:scaleX(0.9191);transform-origin:0 0;">AAS0004R - AO SC RATE MEAS</div>
<div class="t" style="left:700px;top:596px;font-size:11px;line-height:11px;transform:scaleX(0.9204);transform-origin:0 0;">AAS000MZ - AO CRS STATUS</div>
<div class="t" style="left:700px;top:612px;font-size:11px;line-height:11px;transform:scaleX(0.9272);transform-origin:0 0;">AAS0010W - AO CSS LIG MEAS</div>
<div class="t" style="left:700px;top:628px;font-size:11px;line-height:11px;transform:scaleX(0.9204);transform-origin:0 0;">AAS0011W - AO CSS LIG FILT</div>
</body></html>
